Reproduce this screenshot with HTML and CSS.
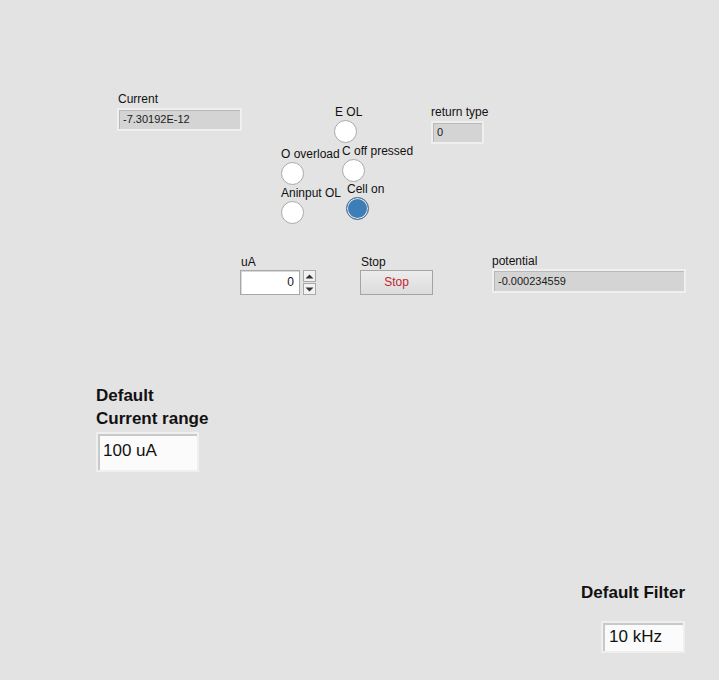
FILE: index.html
```html
<!DOCTYPE html>
<html>
<head>
<meta charset="utf-8">
<link rel="stylesheet" href="styles.css">
</head>
<body>
<div class="panel">
  <div class="ctl c-current">
    <span class="lbl">Current</span>
    <div class="ind ind-current">-7.30192E-12</div>
  </div>

  <div class="ctl c-eol"><span class="lbl">E OL</span><span class="led"></span></div>
  <div class="ctl c-oover"><span class="lbl">O overload</span><span class="led"></span></div>
  <div class="ctl c-coff"><span class="lbl">C off pressed</span><span class="led"></span></div>
  <div class="ctl c-anin"><span class="lbl">Aninput OL</span><span class="led"></span></div>
  <div class="ctl c-cell"><span class="lbl">Cell on</span><span class="led on"></span></div>

  <div class="ctl c-ret">
    <span class="lbl">return type</span>
    <div class="ind ind-ret">0</div>
  </div>

  <div class="ctl c-ua">
    <span class="lbl">uA</span>
    <div class="numrow">
      <div class="num">0</div>
      <div class="spin">
        <span class="arr"><svg width="9" height="5" viewBox="0 0 9 5"><path d="M0.5 4.5 L4.5 0.5 L8.5 4.5 Z" fill="#333"/></svg></span>
        <span class="arr"><svg width="9" height="5" viewBox="0 0 9 5"><path d="M0.5 0.5 L4.5 4.5 L8.5 0.5 Z" fill="#333"/></svg></span>
      </div>
    </div>
  </div>

  <div class="ctl c-stop">
    <span class="lbl">Stop</span>
    <div class="btn">Stop</div>
  </div>

  <div class="ctl c-pot">
    <span class="lbl">potential</span>
    <div class="ind ind-pot">-0.000234559</div>
  </div>

  <div class="ctl c-range">
    <span class="big">Default<br>Current range</span>
    <div class="str str-range">100 uA</div>
  </div>

  <div class="ctl c-filter">
    <span class="big">Default Filter</span>
    <div class="str str-filter">10 kHz</div>
  </div>
</div>
</body>
</html>
```

FILE: styles.css
```css
html, body {
  margin: 0;
  padding: 0;
  background: #e3e3e3;
}
.panel {
  position: relative;
  width: 719px;
  height: 680px;
  background: #e3e3e3;
  font-family: "Liberation Sans", Arial, sans-serif;
  font-size: 12px;
  color: #111;
  overflow: hidden;
}
.ctl {
  position: absolute;
  display: flex;
  flex-direction: column;
  align-items: flex-start;
}
.lbl {
  line-height: 13px;
  white-space: nowrap;
}
.ind {
  box-sizing: border-box;
  background: #d4d4d4;
  border: 2px solid #efefef;
  box-shadow: inset 1px 1px 0 #b9b9b9;
  height: 23px;
  line-height: 19px;
  padding-left: 4px;
  white-space: nowrap;
  font-size: 11px;
  color: #1a1a1a;
}
.c-current { left: 118px; top: 93px; }
.c-current .ind { margin-left: -1px; margin-top: 2px; width: 125px; }

.led {
  display: block;
  box-sizing: border-box;
  width: 23px;
  height: 23px;
  border-radius: 50%;
  background: #fff;
  border: 1px solid #a9a9a9;
  margin-top: 1px;
}
.led.on {
  background: #3d7db8;
  border: 1px solid #5a6f86;
  box-shadow: inset 0 0 0 1px #e8eef4;
  margin-left: -1px;
}
.c-eol { left: 335px; top: 106px; }
.c-eol .led { margin-left: -1px; }
.c-oover { left: 281px; top: 148px; }
.c-coff { left: 342px; top: 145px; }
.c-anin { left: 281px; top: 187px; }
.c-cell { left: 347px; top: 183px; }

.c-ret { left: 431px; top: 106px; }
.c-ret .ind { width: 53px; margin-top: 2px; }

.c-ua { left: 241px; top: 256px; }
.numrow {
  display: flex;
  align-items: flex-start;
  gap: 3px;
  margin-top: 1px;
  margin-left: -1px;
}
.num {
  box-sizing: border-box;
  width: 60px;
  height: 25px;
  background: #fff;
  border: 1px solid #a8a8a8;
  box-shadow: inset 1px 1px 0 #d8d8d8;
  text-align: right;
  padding-right: 5px;
  line-height: 23px;
}
.spin {
  display: flex;
  flex-direction: column;
  gap: 1px;
}
.arr {
  box-sizing: border-box;
  width: 13px;
  height: 12px;
  background: #f2f2f2;
  border: 1px solid #a9a9a9;
  display: flex;
  align-items: center;
  justify-content: center;
}

.c-stop { left: 361px; top: 256px; }
.btn {
  box-sizing: border-box;
  margin-top: 1px;
  margin-left: -1px;
  width: 73px;
  height: 25px;
  background: linear-gradient(#ececec, #dcdcdc);
  border: 1px solid #a4a4a4;
  color: #c0262d;
  text-align: center;
  line-height: 23px;
}

.c-pot { left: 492px; top: 255px; }
.c-pot .ind { width: 194px; margin-top: 1px; height: 24px; line-height: 20px; }

.big {
  font-weight: bold;
  font-size: 17px;
  line-height: 23px;
  white-space: nowrap;
}
.str {
  box-sizing: border-box;
  background: #fbfbfb;
  border: 2px solid #efefef;
  box-shadow: inset 2px 2px 0 #c9c9c9;
  font-size: 17px;
  white-space: nowrap;
  color: #111;
}
.c-range { left: 96px; top: 384px; }
.str-range {
  width: 103px;
  height: 40px;
  margin-top: 2px;
  padding: 7px 0 0 5px;
}
.c-filter { right: 34px; top: 581px; align-items: flex-end; }
.str-filter {
  width: 84px;
  height: 32px;
  margin-top: 17px;
  padding: 4px 0 0 6px;
}
```
